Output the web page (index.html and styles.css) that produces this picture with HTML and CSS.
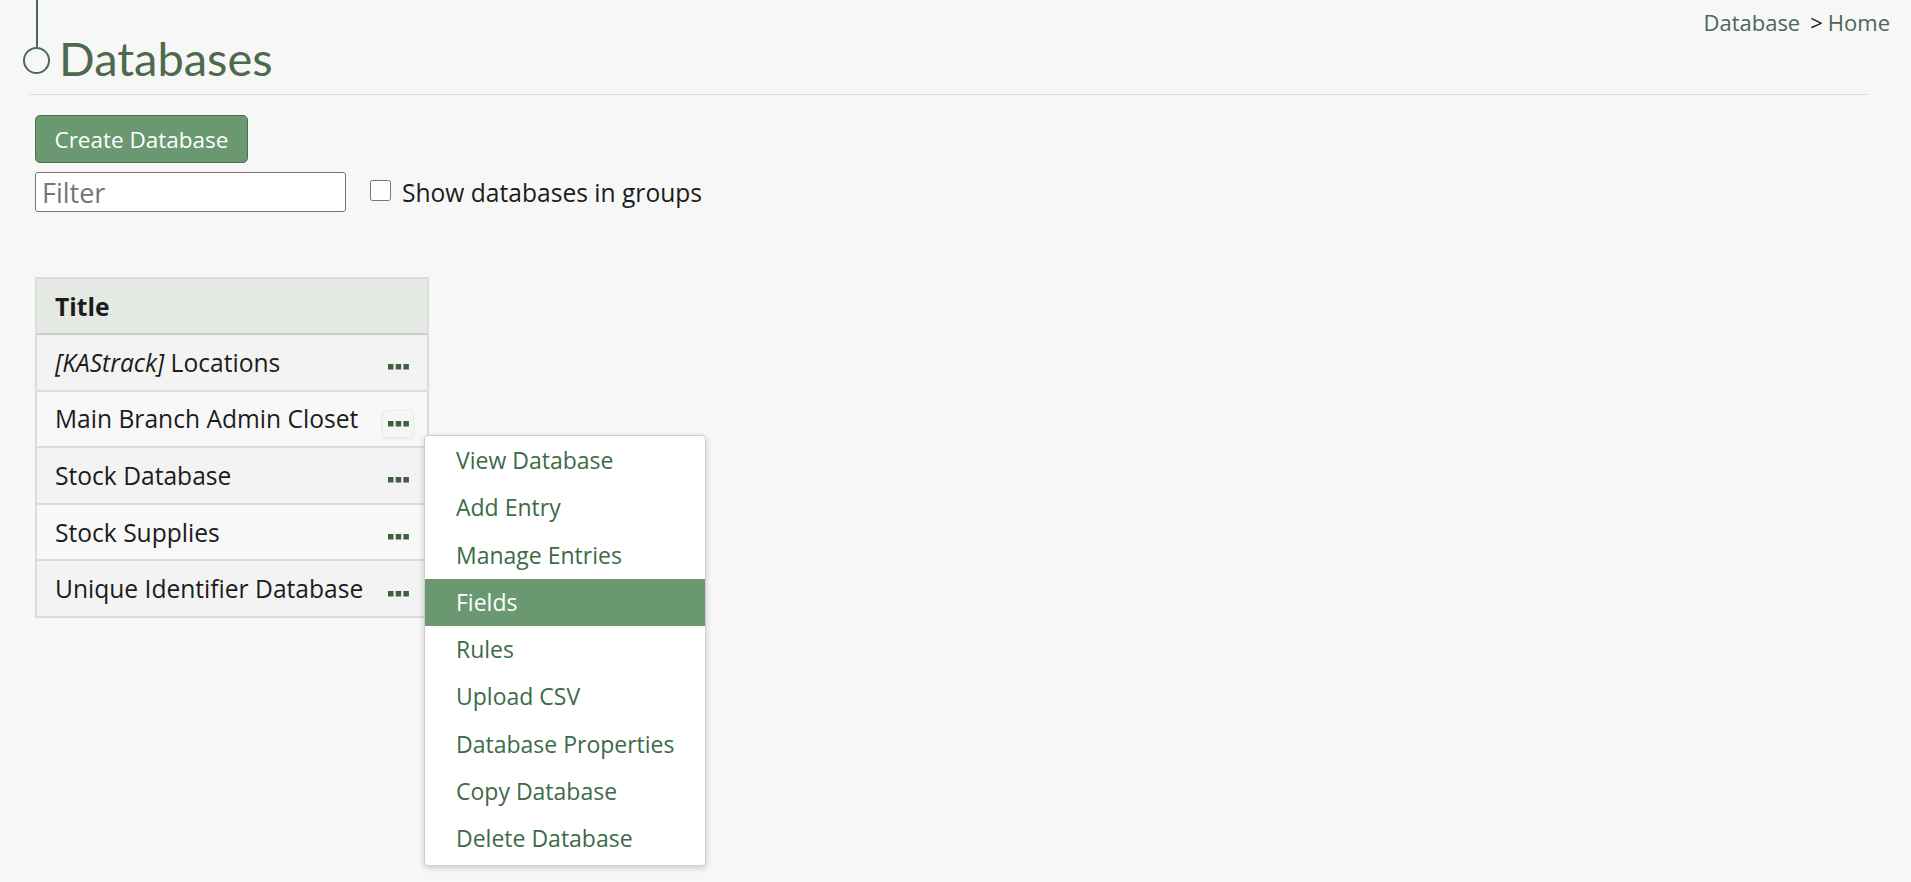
FILE: index.html
```html
<!DOCTYPE html>
<html lang="en">
<head>
<meta charset="utf-8">
<title>Databases</title>
<link rel="stylesheet" href="styles.css">
</head>
<body>
<div class="page">
  <div class="title-row">
    <h1 class="heading">
      <span class="marker"><span class="stem"></span><span class="ring"></span></span>
      <span class="heading-text">Databases</span>
    </h1>
    <nav class="crumbs"><a class="crumb">Database</a><span class="sep">&gt;</span><a class="crumb">Home</a></nav>
  </div>
  <div class="rule"></div>

  <div class="content">
    <button class="btn-create" type="button">Create Database</button>
    <div class="filter-row">
      <input class="filter" type="text" placeholder="Filter">
      <label class="group-toggle"><input type="checkbox" class="check"><span>Show databases in groups</span></label>
    </div>

    <div class="table-wrap">
      <div class="db-table">
        <div class="th">Title</div>
        <div class="tr odd"><span class="name"><em>[KAStrack]</em> Locations</span><span class="more"><svg width="21" height="6" viewBox="0 0 21 6"><rect x="0" y="0" width="5.5" height="5.5"/><rect x="7.7" y="0" width="5.5" height="5.5"/><rect x="15.4" y="0" width="5.5" height="5.5"/></svg></span></div>
        <div class="tr even"><span class="name">Main Branch Admin Closet</span><span class="more active"><svg width="21" height="6" viewBox="0 0 21 6"><rect x="0" y="0" width="5.5" height="5.5"/><rect x="7.7" y="0" width="5.5" height="5.5"/><rect x="15.4" y="0" width="5.5" height="5.5"/></svg></span></div>
        <div class="tr odd"><span class="name">Stock Database</span><span class="more"><svg width="21" height="6" viewBox="0 0 21 6"><rect x="0" y="0" width="5.5" height="5.5"/><rect x="7.7" y="0" width="5.5" height="5.5"/><rect x="15.4" y="0" width="5.5" height="5.5"/></svg></span></div>
        <div class="tr even"><span class="name">Stock Supplies</span><span class="more"><svg width="21" height="6" viewBox="0 0 21 6"><rect x="0" y="0" width="5.5" height="5.5"/><rect x="7.7" y="0" width="5.5" height="5.5"/><rect x="15.4" y="0" width="5.5" height="5.5"/></svg></span></div>
        <div class="tr odd last"><span class="name">Unique Identifier Database</span><span class="more"><svg width="21" height="6" viewBox="0 0 21 6"><rect x="0" y="0" width="5.5" height="5.5"/><rect x="7.7" y="0" width="5.5" height="5.5"/><rect x="15.4" y="0" width="5.5" height="5.5"/></svg></span></div>
      </div>

      <ul class="menu">
        <li class="menu-item">View Database</li>
        <li class="menu-item">Add Entry</li>
        <li class="menu-item">Manage Entries</li>
        <li class="menu-item selected">Fields</li>
        <li class="menu-item">Rules</li>
        <li class="menu-item">Upload CSV</li>
        <li class="menu-item">Database Properties</li>
        <li class="menu-item">Copy Database</li>
        <li class="menu-item">Delete Database</li>
      </ul>
    </div>
  </div>
</div>
</body>
</html>
```

FILE: styles.css
```css
* { box-sizing: border-box; }

html, body {
  margin: 0;
  padding: 0;
  min-height: 100%;
  background: #f7f7f7;
}

html { height: 100%; }

body {
  font-family: "Open Sans", "Noto Sans", "Liberation Sans", sans-serif;
  color: #1c1c1c;
}

.page {
  min-height: 100vh;
  padding: 0 21px 0 0;
}

.title-row {
  display: flex;
  justify-content: space-between;
  align-items: flex-start;
}

.heading {
  display: flex;
  align-items: flex-start;
  margin: 0 0 0 23px;
  font-weight: normal;
}

.marker {
  display: flex;
  flex-direction: column;
  align-items: center;
  width: 27px;
}

.stem {
  width: 2px;
  height: 47px;
  background: #4f6a50;
}

.ring {
  width: 27px;
  height: 27px;
  border: 2px solid #4f6a50;
  border-radius: 50%;
}

.heading-text {
  margin: 35px 0 0 9px;
  font-family: Lato, "Open Sans", sans-serif;
  font-size: 47px;
  line-height: 46px;
  color: #4d6a4e;
  font-weight: normal;
}

.crumbs {
  margin-top: 8px;
  font-size: 22px;
  line-height: 28px;
  color: #222;
}

.crumb {
  color: #4d6658;
}

.sep {
  margin: 0 5px 0 10px;
  color: #222;
}

.rule {
  margin: 13px 21px 0 29px;
  border-top: 1px solid #dedede;
}

.content {
  padding: 20px 0 0 35px;
}

.btn-create {
  display: block;
  width: 213px;
  height: 48px;
  padding: 0;
  border: 1px solid #4e6e52;
  border-radius: 5px;
  background: #6a9870;
  color: #fff;
  font-family: "Open Sans", "Noto Sans", sans-serif;
  font-size: 22.5px;
}

.filter-row {
  display: flex;
  align-items: center;
  margin-top: 9px;
}

.filter {
  width: 311px;
  height: 40px;
  margin: 0;
  padding: 0 6px;
  border: 1px solid #767676;
  border-radius: 3px;
  background: #fff;
  font-family: "Open Sans", "Noto Sans", sans-serif;
  font-size: 27px;
  color: #222;
}

.filter::placeholder {
  color: #757575;
}

.group-toggle {
  display: flex;
  align-items: center;
  margin-left: 24px;
  font-size: 24.6px;
  color: #1c1c1c;
}

.check {
  width: 21px;
  height: 21px;
  margin: 0 11px 4px 0;
}

.table-wrap {
  position: relative;
  margin-top: 65px;
  width: 394px;
}

.db-table {
  width: 394px;
  border: 2px solid #dcdcdc;
  border-bottom: 0;
}

.th {
  display: flex;
  align-items: center;
  height: 56px;
  padding-left: 18px;
  background: #e4e9e4;
  border-bottom: 2px solid #cbcbcb;
  font-size: 24.6px;
  font-weight: bold;
  color: #1c1c1c;
}

.tr {
  display: flex;
  align-items: center;
  justify-content: space-between;
  height: 56.6px;
  padding: 0 13px 0 18px;
  border-bottom: 2px solid #dcdcdc;
  font-size: 24.6px;
  color: #1c1c1c;
}

.tr.odd { background: #f3f3f3; }
.tr.even { background: #f8f8f8; }

.name {
  white-space: nowrap;
}

.name em {
  font-style: italic;
}

.more {
  display: flex;
  align-items: center;
  justify-content: center;
  flex: none;
  width: 32px;
  height: 28px;
  margin-top: 10px;
  border: 1px solid transparent;
  border-radius: 5px;
}

.more svg {
  fill: #3f5f40;
}

.more.active {
  background: #f6f6f6;
  border-color: #ececec;
  box-shadow: 0 1px 3px rgba(0, 0, 0, 0.08);
}

.menu {
  position: absolute;
  left: 389px;
  top: 158px;
  width: 282px;
  margin: 0;
  padding: 1px 0 2px;
  list-style: none;
  background: #fff;
  border: 1px solid #cfcfcf;
  border-radius: 4px;
  box-shadow: 0 2px 6px rgba(0, 0, 0, 0.18);
}

.menu-item {
  height: 47.3px;
  line-height: 47px;
  padding-left: 31px;
  font-size: 23px;
  color: #3e6a47;
}

.menu-item.selected {
  background: #6a9870;
  color: #fff;
}
```
